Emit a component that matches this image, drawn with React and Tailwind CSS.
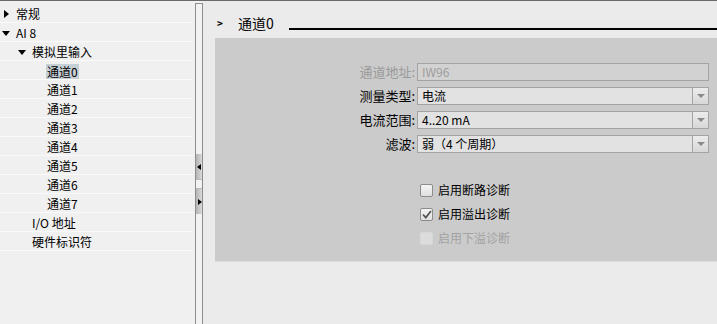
import React from "react";

const font = { fontFamily: '"Noto Sans CJK SC", "Liberation Sans", sans-serif' };

const treeRows = [
  { label: "常规", indent: 16, arrow: "right", ax: 4 },
  { label: "AI 8", indent: 16, arrow: "down", ax: 2 },
  { label: "模拟里输入", indent: 32, arrow: "down", ax: 18 },
  { label: "通道0", indent: 46, selected: true },
  { label: "通道1", indent: 47 },
  { label: "通道2", indent: 47 },
  { label: "通道3", indent: 47 },
  { label: "通道4", indent: 47 },
  { label: "通道5", indent: 47 },
  { label: "通道6", indent: 47 },
  { label: "通道7", indent: 47 },
  { label: "I/O 地址", indent: 32 },
  { label: "硬件标识符", indent: 32 },
];

function TreeRow({ row }) {
  return (
    <div className="relative h-[19px] border-b border-[#fafafa] flex items-center text-[12px] text-black">
      {row.arrow === "right" && (
        <span className="absolute top-[6px] w-0 h-0 border-y-[4px] border-y-transparent border-l-[5px] border-l-black" style={{ left: row.ax }} />
      )}
      {row.arrow === "down" && (
        <span className="absolute top-[8px] w-0 h-0 border-x-[4px] border-x-transparent border-t-[5px] border-t-black" style={{ left: row.ax }} />
      )}
      <span
        className={row.selected ? "bg-[#c6ced6] px-[1px] leading-[15px] mt-[3px]" : "leading-[15px]"}
        style={{ marginLeft: row.indent }}
      >
        {row.label}
      </span>
    </div>
  );
}

function Field({ label, value, disabled, dropdown }) {
  return (
    <div className="flex items-center h-[18px]">
      <div className={`w-[202px] text-right pr-[2px] text-[13px] ${disabled ? "text-[#9a9a9a]" : "text-black"}`}>
        {label}
      </div>
      <div
        className={`flex-1 h-[18px] flex items-center border border-[#a4a4a4] ${disabled ? "bg-[#d2d2d2]" : "bg-[#e2e2e2]"}`}
      >
        <span className={`flex-1 pl-[4px] text-[12px] leading-[16px] ${disabled ? "text-[#9c9c9c]" : "text-black"}`}>
          {value}
        </span>
        {dropdown && (
          <span className="w-[16px] h-[16px] border-l border-[#a4a4a4] bg-gradient-to-b from-[#ececec] to-[#d8d8d8] flex items-center justify-center">
            <span className="w-0 h-0 border-x-[4px] border-x-transparent border-t-[4px] border-t-[#8a8a8a]" />
          </span>
        )}
      </div>
    </div>
  );
}

function Check({ label, checked, disabled }) {
  return (
    <div className="flex items-center h-[14px]">
      <span
        className={`w-[13px] h-[13px] rounded-[2px] border flex items-center justify-center ${
          disabled ? "border-[#d8d8d8] bg-[#dcdcdc]" : "border-[#8c8c8c] bg-gradient-to-b from-[#f4f4f4] to-[#e0e0e0]"
        }`}
      >
        {checked && (
          <svg width="10" height="9" viewBox="0 0 10 9">
            <path d="M1 4.5 L3.8 7.5 L9 1" fill="none" stroke="#555" strokeWidth="1.8" />
          </svg>
        )}
      </span>
      <span className={`ml-[5px] text-[12px] ${disabled ? "text-[#a2a2a2]" : "text-black"}`}>{label}</span>
    </div>
  );
}

export default function App() {
  return (
    <div className="w-[717px] h-[324px] flex border-t border-[#6a6a6a] overflow-hidden bg-[#ebebeb]" style={font}>
      {/* tree */}
      <div className="w-[195px] h-full bg-[#f0f0f0] pt-[3px] pr-[2px]">
        {treeRows.map((r) => (
          <TreeRow key={r.label} row={r} />
        ))}
      </div>

      {/* splitter */}
      <div className="w-[8px] h-full pt-[2px] bg-[#f0f0f0]">
        <div className="h-full border-x border-[#8e8e8e] border-t bg-[#f2f2f2] flex flex-col pt-[150px]">
          <div className="h-[25px] bg-gradient-to-r from-[#b4b4b4] to-[#dadada] flex items-center justify-end pr-[1px]">
            <span className="w-0 h-0 border-y-[3px] border-y-transparent border-r-[4px] border-r-black" />
          </div>
          <div className="h-[10px] border-y border-[#b8b8b8]" />
          <div className="h-[25px] bg-gradient-to-r from-[#b4b4b4] to-[#dadada] flex items-center justify-end">
            <span className="w-0 h-0 border-y-[3px] border-y-transparent border-l-[4px] border-l-black" />
          </div>
        </div>
      </div>

      {/* content */}
      <div className="flex-1 h-full bg-[#ebebeb] pl-[12px]">
        <div className="h-[37px] flex items-end pb-[6px]">
          <span className="ml-[2px] mb-[4px] text-[10px] font-bold leading-none text-black">&gt;</span>
          <span className="ml-[15px] text-[14px] leading-[18px] text-black">通道0</span>
          <div className="flex-1 ml-[15px] mb-[2px] h-[2px] bg-black" />
        </div>
        <div className="h-[224px] bg-[#cbcbcb] border-b border-[#dadada] pt-[25px] pr-[8px]">
          <div className="flex flex-col gap-[6px]">
            <Field label="通道地址:" value="IW96" disabled />
            <Field label="测量类型:" value="电流" dropdown />
            <Field label="电流范围:" value="4..20 mA" dropdown />
            <Field label="滤波:" value="弱（4 个周期）" dropdown />
          </div>
          <div className="ml-[205px] mt-[30px] flex flex-col gap-[10px]">
            <Check label="启用断路诊断" />
            <Check label="启用溢出诊断" checked />
            <Check label="启用下溢诊断" disabled />
          </div>
        </div>
      </div>
    </div>
  );
}
